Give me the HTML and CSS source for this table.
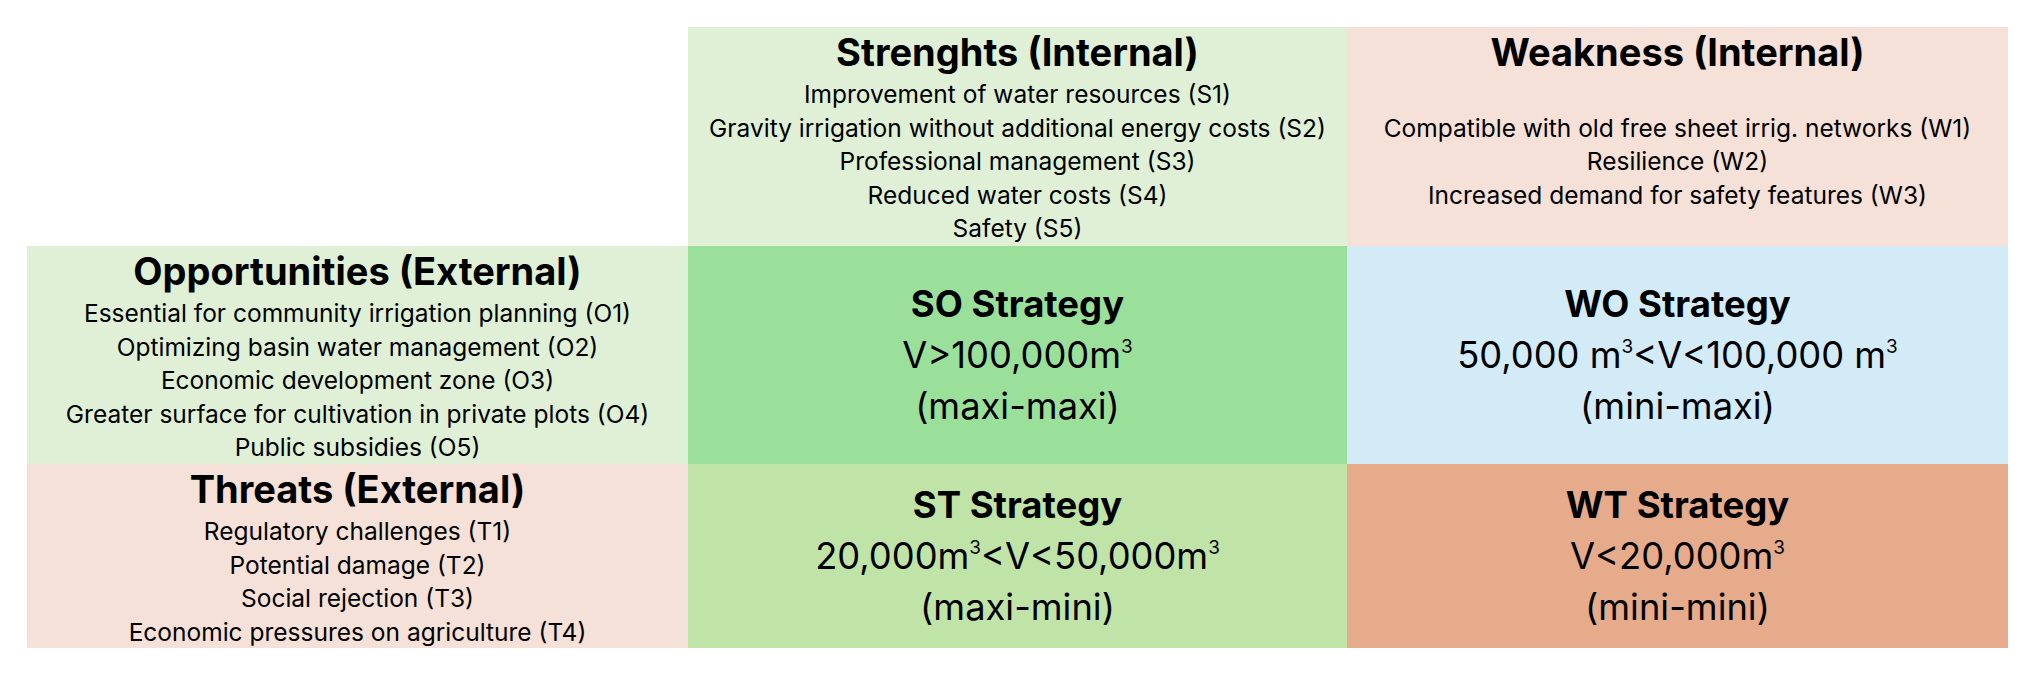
FILE: index.html
```html
<!DOCTYPE html>
<html lang="en">
<head>
<meta charset="utf-8">
<title>SWOT strategy matrix</title>
<link rel="stylesheet" href="styles.css">
</head>
<body>
<div class="swot">
  <div class="cell empty"></div>

  <div class="cell top light-green">
    <div class="head">Strenghts (Internal)</div>
    <div class="body">
      <div>Improvement of water resources (S1)</div>
      <div>Gravity irrigation without additional energy costs (S2)</div>
      <div>Professional management (S3)</div>
      <div>Reduced water costs (S4)</div>
      <div>Safety (S5)</div>
    </div>
  </div>

  <div class="cell top light-peach">
    <div class="head">Weakness (Internal)</div>
    <div class="body">
      <div>Compatible with old free sheet irrig. networks (W1)</div>
      <div>Resilience (W2)</div>
      <div>Increased demand for safety features (W3)</div>
    </div>
  </div>

  <div class="cell side light-green">
    <div class="head">Opportunities (External)</div>
    <div>Essential for community irrigation planning (O1)</div>
    <div>Optimizing basin water management (O2)</div>
    <div>Economic development zone (O3)</div>
    <div>Greater surface for cultivation in private plots (O4)</div>
    <div>Public subsidies (O5)</div>
  </div>

  <div class="cell strat so">
    <div class="strat-head">SO Strategy</div>
    <div class="strat-line">V&gt;100,000m<sup>3</sup></div>
    <div class="strat-line">(maxi-maxi)</div>
  </div>

  <div class="cell strat wo">
    <div class="strat-head">WO Strategy</div>
    <div class="strat-line">50,000 m<sup>3</sup>&lt;V&lt;100,000 m<sup>3</sup></div>
    <div class="strat-line">(mini-maxi)</div>
  </div>

  <div class="cell side light-peach">
    <div class="head">Threats (External)</div>
    <div>Regulatory challenges (T1)</div>
    <div>Potential damage (T2)</div>
    <div>Social rejection (T3)</div>
    <div>Economic pressures on agriculture (T4)</div>
  </div>

  <div class="cell strat st">
    <div class="strat-head">ST Strategy</div>
    <div class="strat-line">20,000m<sup>3</sup>&lt;V&lt;50,000m<sup>3</sup></div>
    <div class="strat-line">(maxi-mini)</div>
  </div>

  <div class="cell strat wt">
    <div class="strat-head">WT Strategy</div>
    <div class="strat-line">V&lt;20,000m<sup>3</sup></div>
    <div class="strat-line">(mini-mini)</div>
  </div>
</div>
</body>
</html>
```

FILE: styles.css
```css
html, body {
  margin: 0;
  padding: 0;
  background: #ffffff;
}

body {
  font-family: "Inter", "Liberation Sans", sans-serif;
  color: #000000;
}

.swot {
  display: grid;
  grid-template-columns: 661px 659px 661px;
  grid-template-rows: 219px 218px 184px;
  padding: 27px 0 0 27px;
  width: max-content;
}

.cell {
  display: flex;
  flex-direction: column;
  align-items: center;
  text-align: center;
  font-size: 24.5px;
  line-height: 33.5px;
  white-space: nowrap;
  overflow: visible;
}

.head {
  font-weight: 700;
  font-size: 38px;
  line-height: 40px;
  margin-bottom: 6px;
}

.top {
  padding-top: 5px;
}

.top .body {
  flex: 1;
  display: flex;
  flex-direction: column;
  justify-content: center;
}

.side {
  justify-content: center;
  padding-top: 6px;
}

.strat {
  justify-content: center;
}

.strat-head {
  font-weight: 700;
  font-size: 36.5px;
  line-height: 52px;
}

.strat-line {
  font-size: 36.3px;
  line-height: 51px;
}

.strat-line sup {
  font-size: 0.52em;
  line-height: 0;
  vertical-align: 0.78em;
}

.light-green { background: #dff0d6; }
.light-peach { background: #f5e1d7; }
.so { background: #9be09a; }
.wo { background: #d3eaf7; }
.st { background: #c0e4a8; }
.wt { background: #e6ab8a; }
```
